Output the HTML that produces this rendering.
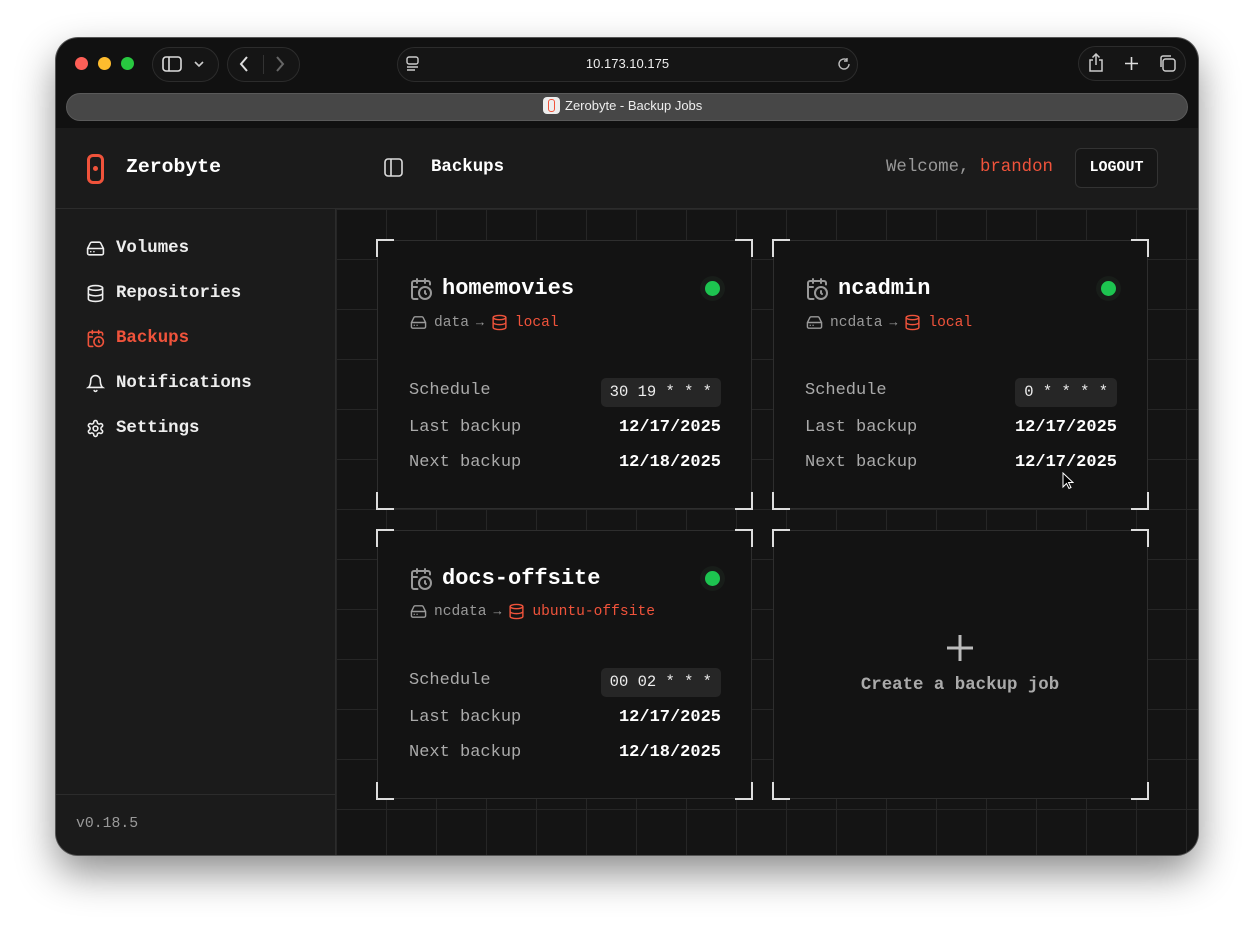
<!DOCTYPE html>
<html><head><meta charset="utf-8"><style>
*{margin:0;padding:0;box-sizing:border-box}
body{width:1254px;height:929px;background:#fff;position:relative;overflow:hidden;font-family:"Liberation Mono",monospace}
.win{position:absolute;left:56px;top:38px;width:1142px;height:817px;border-radius:22px;background:#111;overflow:hidden;box-shadow:0 0 0 1px #555,0 18px 40px rgba(0,0,0,.45)}
.a{position:absolute}
.pill{position:absolute;border:1px solid #2c2c2c;border-radius:18px;background:#151515}
.side{left:0;top:90px;width:280px;height:727px;background:#1b1b1b;border-right:1px solid #2c2c2c}
.main{left:280px;top:171px;width:862px;height:646px;background-color:#141414;
background-image:linear-gradient(#262626 1px,transparent 1px),linear-gradient(90deg,#262626 1px,transparent 1px);background-size:50px 50px;background-position:0 0}
.nav{position:absolute;left:30px;font-size:17.4px;font-weight:bold;color:#eee;display:flex;align-items:center;gap:11px}
.nav svg{width:19px;height:19px}
.card{position:absolute;width:375px;height:269px;background:#131313;border:1.5px solid #2e2e2e}
.cn{position:absolute;width:18px;height:18px;border-color:#ddd;border-style:solid;border-width:0}
.tl{left:-2px;top:-2px;border-left-width:2.5px;border-top-width:2.5px}
.tr{right:-2px;top:-2px;border-right-width:2.5px;border-top-width:2.5px}
.bl{left:-2px;bottom:-2px;border-left-width:2.5px;border-bottom-width:2.5px}
.br{right:-2px;bottom:-2px;border-right-width:2.5px;border-bottom-width:2.5px}
.title{position:absolute;left:31px;top:35px;display:flex;align-items:center;gap:9px;font-size:22px;font-weight:bold;color:#fff}
.sub{position:absolute;left:32px;top:73px;display:flex;align-items:center;gap:7px;font-size:14.6px;color:#999}
.red{color:#f0533b}
.dot{position:absolute;left:327px;top:40px;width:15px;height:15px;border-radius:50%;background:#1dc450;box-shadow:0 0 0 5px #181d19}
.lbl{position:absolute;left:31px;font-size:17px;color:#aaa}
.val{position:absolute;right:30px;font-size:17px;font-weight:bold;color:#fff}
.chip{position:absolute;right:30px;top:137px;height:29px;padding:0 9px;background:#262626;border-radius:5px;font-size:15.5px;color:#eee;line-height:29px}
</style></head><body>
<div class="win">
 <div class="a" style="left:19px;top:19px;width:13px;height:13px;border-radius:50%;background:#fe5f57"></div>
 <div class="a" style="left:42px;top:19px;width:13px;height:13px;border-radius:50%;background:#febc2e"></div>
 <div class="a" style="left:65px;top:19px;width:13px;height:13px;border-radius:50%;background:#28c840"></div>
 <div class="pill" style="left:96px;top:9px;width:67px;height:35px"></div>
 <svg class="a" style="left:106px;top:17px" width="20" height="18" viewBox="0 0 20 18" fill="none" stroke="#ddd" stroke-width="1.6"><rect x="1" y="2" width="18" height="14" rx="3"/><line x1="7" y1="2" x2="7" y2="16"/></svg>
 <svg class="a" style="left:138px;top:22px" width="10" height="8" viewBox="0 0 10 8" fill="none" stroke="#ccc" stroke-width="1.6"><path d="M1 2l4 4 4-4"/></svg>
 <div class="pill" style="left:171px;top:9px;width:73px;height:35px"></div>
 <svg class="a" style="left:182px;top:17px" width="12" height="18" viewBox="0 0 12 18" fill="none" stroke="#ddd" stroke-width="2"><path d="M9 2L3 9l6 7"/></svg>
 <div class="a" style="left:207px;top:17px;width:1px;height:19px;background:#333"></div>
 <svg class="a" style="left:218px;top:17px" width="12" height="18" viewBox="0 0 12 18" fill="none" stroke="#666" stroke-width="2"><path d="M3 2l6 7-6 7"/></svg>
 <div class="pill" style="left:341px;top:9px;width:461px;height:35px"></div>
 <svg class="a" style="left:350px;top:18px" width="14" height="16" viewBox="0 0 14 16" fill="none" stroke="#ccc" stroke-width="1.4"><rect x="1" y="1" width="11" height="7" rx="2"/><line x1="1" y1="11" x2="12" y2="11"/><line x1="1" y1="14" x2="9" y2="14"/></svg>
 <div class="a" style="left:341px;top:18px;width:461px;text-align:center;font-family:'Liberation Sans',sans-serif;font-size:13px;color:#eee">10.173.10.175</div>
 <svg class="a" style="left:781px;top:19px" width="14" height="14" viewBox="0 0 14 14" fill="none" stroke="#bbb" stroke-width="1.4"><path d="M12 7a5 5 0 1 1-2-4"/><path d="M10 1v3h-3"/></svg>
 <div class="pill" style="left:1022px;top:8px;width:108px;height:35px"></div>
 <svg class="a" style="left:1031px;top:15px" width="18" height="20" viewBox="0 0 18 20" fill="none" stroke="#ccc" stroke-width="1.5"><path d="M6 7H3v11h12V7h-3"/><path d="M9 1v11M5.5 4.5L9 1l3.5 3.5"/></svg>
 <svg class="a" style="left:1068px;top:18px" width="15" height="15" viewBox="0 0 15 15" stroke="#ddd" stroke-width="1.6"><path d="M7.5 1v13M1 7.5h13"/></svg>
 <svg class="a" style="left:1102px;top:16px" width="19" height="19" viewBox="0 0 19 19" fill="none" stroke="#ccc" stroke-width="1.5"><rect x="5" y="5" width="12" height="12" rx="2.5"/><path d="M3 13V4a2 2 0 0 1 2-2h8"/></svg>
 <div class="a" style="left:10px;top:55px;width:1122px;height:28px;border-radius:14px;background:#474747;border:1px solid #5a5a5a"></div>
 <div class="a" style="left:487px;top:59px;width:17px;height:17px;border-radius:4px;background:#eee"></div>
 <div class="a" style="left:492px;top:61px;width:7px;height:13px;border-radius:3px;border:1.6px solid #f0533b"></div>
 <div class="a" style="left:509px;top:60px;font-family:'Liberation Sans',sans-serif;font-size:13px;color:#eee">Zerobyte - Backup Jobs</div>
 <div class="a" style="left:0;top:90px;width:1142px;height:81px;background:#1b1b1b;border-bottom:1px solid #2c2c2c"></div>
 <div class="a" style="left:31px;top:116px;width:17px;height:30px;border-radius:6px;border:3px solid #f0533b"></div>
 <div class="a" style="left:37px;top:128px;width:5px;height:5px;border-radius:50%;background:#f0533b"></div>
 <div class="a" style="left:70px;top:118px;font-size:19.8px;font-weight:bold;color:#fff">Zerobyte</div>
 <svg class="a" style="left:328px;top:120px" width="19" height="19" viewBox="0 0 19 19" fill="none" stroke="#ddd" stroke-width="1.6"><rect x="1" y="1" width="17" height="17" rx="3"/><line x1="7" y1="1" x2="7" y2="18"/></svg>
 <div class="a" style="left:375px;top:120px;font-size:17.4px;font-weight:bold;color:#fff">Backups</div>
 <div class="a" style="left:830px;top:120px;font-size:17.4px;color:#999">Welcome, <span class="red">brandon</span></div>
 <div class="a" style="left:1019px;top:110px;width:83px;height:40px;border:1px solid #333;border-radius:6px;background:#161616;color:#fff;font-weight:bold;font-size:15px;text-align:center;line-height:38px">LOGOUT</div>
 <div class="a side" style="top:171px;height:646px"></div>
 <div class="nav" style="top:201px"><svg viewBox="0 0 24 24" fill="none" stroke="#eee" stroke-width="2" stroke-linecap="round" stroke-linejoin="round"><path d="M22 12H2M5.45 5.11L2 12v6a2 2 0 0 0 2 2h16a2 2 0 0 0 2-2v-6l-3.45-6.89A2 2 0 0 0 16.760 4H7.24a2 2 0 0 0-1.79 1.11z"/><path d="M6 16h.01M10 16h.01"/></svg>Volumes</div>
 <div class="nav" style="top:246px"><svg viewBox="0 0 24 24" fill="none" stroke="#eee" stroke-width="2" stroke-linecap="round"><ellipse cx="12" cy="5" rx="9" ry="3"/><path d="M3 5v14a9 3 0 0 0 18 0V5"/><path d="M3 12a9 3 0 0 0 18 0"/></svg>Repositories</div>
 <div class="nav" style="top:291px;color:#f0533b"><svg viewBox="0 0 24 24" fill="none" stroke="#f0533b" stroke-width="2" stroke-linecap="round"><path d="M21 7.5V6a2 2 0 0 0-2-2H5a2 2 0 0 0-2 2v14a2 2 0 0 0 2 2h3.5M16 2v4M8 2v4M3 10h5"/><circle cx="16" cy="16" r="6"/><path d="M16 14v2l1 1"/></svg>Backups</div>
 <div class="nav" style="top:336px"><svg viewBox="0 0 24 24" fill="none" stroke="#eee" stroke-width="2" stroke-linecap="round"><path d="M6 8a6 6 0 0 1 12 0c0 7 3 9 3 9H3s3-2 3-9"/><path d="M10.3 21a1.94 1.94 0 0 0 3.4 0"/></svg>Notifications</div>
 <div class="nav" style="top:381px"><svg viewBox="0 0 24 24" fill="none" stroke="#eee" stroke-width="2" stroke-linecap="round"><path d="M12.22 2h-.44a2 2 0 0 0-2 2v.18a2 2 0 0 1-1 1.73l-.43.25a2 2 0 0 1-2 0l-.15-.08a2 2 0 0 0-2.73.73l-.22.38a2 2 0 0 0 .73 2.73l.15.1a2 2 0 0 1 1 1.72v.51a2 2 0 0 1-1 1.74l-.15.09a2 2 0 0 0-.73 2.730l.22.38a2 2 0 0 0 2.73.73l.15-.08a2 2 0 0 1 2 0l.43.25a2 2 0 0 1 1 1.73V20a2 2 0 0 0 2 2h.44a2 2 0 0 0 2-2v-.18a2 2 0 0 1 1-1.73l.43-.25a2 2 0 0 1 2 0l.15.08a2 2 0 0 0 2.73-.73l.22-.39a2 2 0 0 0-.73-2.73l-.15-.08a2 2 0 0 1-1-1.74v-.5a2 2 0 0 1 1-1.74l.15-.09a2 2 0 0 0 .73-2.73l-.22-.38a2 2 0 0 0-2.73-.73l-.15.08a2 2 0 0 1-2 0l-.43-.25a2 2 0 0 1-1-1.73V4a2 2 0 0 0-2-2z"/><circle cx="12" cy="12" r="3"/></svg>Settings</div>
 <div class="a" style="left:0;top:756px;width:280px;height:1px;background:#2c2c2c"></div>
 <div class="a" style="left:20px;top:778px;font-size:14.8px;color:#999">v0.18.5</div>
 <div class="a main"></div>

 <div class="card" style="left:321px;top:202px">
  <i class="cn tl"></i><i class="cn tr"></i><i class="cn bl"></i><i class="cn br"></i>
  <div class="title"><svg width="24" height="24" viewBox="0 0 24 24" fill="none" stroke="#999" stroke-width="2" stroke-linecap="round"><path d="M21 7.5V6a2 2 0 0 0-2-2H5a2 2 0 0 0-2 2v14a2 2 0 0 0 2 2h3.5M16 2v4M8 2v4M3 10h5"/><circle cx="16" cy="16" r="6"/><path d="M16 14v2l1 1"/></svg>homemovies</div>
  <div class="sub"><svg width="17" height="17" viewBox="0 0 24 24" fill="none" stroke="#999" stroke-width="2" stroke-linecap="round"><path d="M22 12H2M5.45 5.11L2 12v6a2 2 0 0 0 2 2h16a2 2 0 0 0 2-2v-6l-3.45-6.89A2 2 0 0 0 16.76 4H7.24a2 2 0 0 0-1.79 1.11z"/><path d="M6 16h.01M10 16h.01"/></svg>data <span style="font-size:13px">→</span> <svg width="17" height="17" viewBox="0 0 24 24" fill="none" stroke="#f0533b" stroke-width="2"><ellipse cx="12" cy="5" rx="9" ry="3"/><path d="M3 5v14a9 3 0 0 0 18 0V5"/><path d="M3 12a9 3 0 0 0 18 0"/></svg><span class="red">local</span></div>
  <div class="dot"></div>
  <div class="lbl" style="top:140px">Schedule</div><div class="chip">30 19 * * *</div>
  <div class="lbl" style="top:177px">Last backup</div><div class="val" style="top:177px">12/17/2025</div>
  <div class="lbl" style="top:212px">Next backup</div><div class="val" style="top:212px">12/18/2025</div>
 </div>
 <div class="card" style="left:717px;top:202px">
  <i class="cn tl"></i><i class="cn tr"></i><i class="cn bl"></i><i class="cn br"></i>
  <div class="title"><svg width="24" height="24" viewBox="0 0 24 24" fill="none" stroke="#999" stroke-width="2" stroke-linecap="round"><path d="M21 7.5V6a2 2 0 0 0-2-2H5a2 2 0 0 0-2 2v14a2 2 0 0 0 2 2h3.5M16 2v4M8 2v4M3 10h5"/><circle cx="16" cy="16" r="6"/><path d="M16 14v2l1 1"/></svg>ncadmin</div>
  <div class="sub"><svg width="17" height="17" viewBox="0 0 24 24" fill="none" stroke="#999" stroke-width="2" stroke-linecap="round"><path d="M22 12H2M5.45 5.11L2 12v6a2 2 0 0 0 2 2h16a2 2 0 0 0 2-2v-6l-3.45-6.89A2 2 0 0 0 16.76 4H7.24a2 2 0 0 0-1.79 1.11z"/><path d="M6 16h.01M10 16h.01"/></svg>ncdata <span style="font-size:13px">→</span> <svg width="17" height="17" viewBox="0 0 24 24" fill="none" stroke="#f0533b" stroke-width="2"><ellipse cx="12" cy="5" rx="9" ry="3"/><path d="M3 5v14a9 3 0 0 0 18 0V5"/><path d="M3 12a9 3 0 0 0 18 0"/></svg><span class="red">local</span></div>
  <div class="dot"></div>
  <div class="lbl" style="top:140px">Schedule</div><div class="chip">0 * * * *</div>
  <div class="lbl" style="top:177px">Last backup</div><div class="val" style="top:177px">12/17/2025</div>
  <div class="lbl" style="top:212px">Next backup</div><div class="val" style="top:212px">12/17/2025</div>
 </div>
 <div class="card" style="left:321px;top:492px">
  <i class="cn tl"></i><i class="cn tr"></i><i class="cn bl"></i><i class="cn br"></i>
  <div class="title"><svg width="24" height="24" viewBox="0 0 24 24" fill="none" stroke="#999" stroke-width="2" stroke-linecap="round"><path d="M21 7.5V6a2 2 0 0 0-2-2H5a2 2 0 0 0-2 2v14a2 2 0 0 0 2 2h3.5M16 2v4M8 2v4M3 10h5"/><circle cx="16" cy="16" r="6"/><path d="M16 14v2l1 1"/></svg>docs-offsite</div>
  <div class="sub" style="top:72px"><svg width="17" height="17" viewBox="0 0 24 24" fill="none" stroke="#999" stroke-width="2" stroke-linecap="round"><path d="M22 12H2M5.45 5.11L2 12v6a2 2 0 0 0 2 2h16a2 2 0 0 0 2-2v-6l-3.45-6.89A2 2 0 0 0 16.76 4H7.24a2 2 0 0 0-1.79 1.11z"/><path d="M6 16h.01M10 16h.01"/></svg>ncdata <span style="font-size:13px">→</span> <svg width="17" height="17" viewBox="0 0 24 24" fill="none" stroke="#f0533b" stroke-width="2"><ellipse cx="12" cy="5" rx="9" ry="3"/><path d="M3 5v14a9 3 0 0 0 18 0V5"/><path d="M3 12a9 3 0 0 0 18 0"/></svg><span class="red">ubuntu-offsite</span></div>
  <div class="dot"></div>
  <div class="lbl" style="top:140px">Schedule</div><div class="chip">00 02 * * *</div>
  <div class="lbl" style="top:177px">Last backup</div><div class="val" style="top:177px">12/17/2025</div>
  <div class="lbl" style="top:212px">Next backup</div><div class="val" style="top:212px">12/18/2025</div>
 </div>
 <div class="card" style="left:717px;top:492px">
  <i class="cn tl"></i><i class="cn tr"></i><i class="cn bl"></i><i class="cn br"></i>
  <svg class="a" style="left:172px;top:103px" width="28" height="28" viewBox="0 0 28 28" stroke="#bbb" stroke-width="3"><path d="M14 1v26M1 14h26"/></svg>
  <div class="a" style="left:0;width:372px;top:145px;text-align:center;font-size:17.4px;font-weight:bold;color:#aaa">Create a backup job</div>
 </div>
 <svg class="a" style="left:1006px;top:434px" width="12" height="18" viewBox="0 0 12 18"><path d="M1 1v14l3.5-3.5 2.5 5 2-1-2.5-5H11z" fill="#000" stroke="#fff" stroke-width="1"/></svg>
</div>
</body></html>
